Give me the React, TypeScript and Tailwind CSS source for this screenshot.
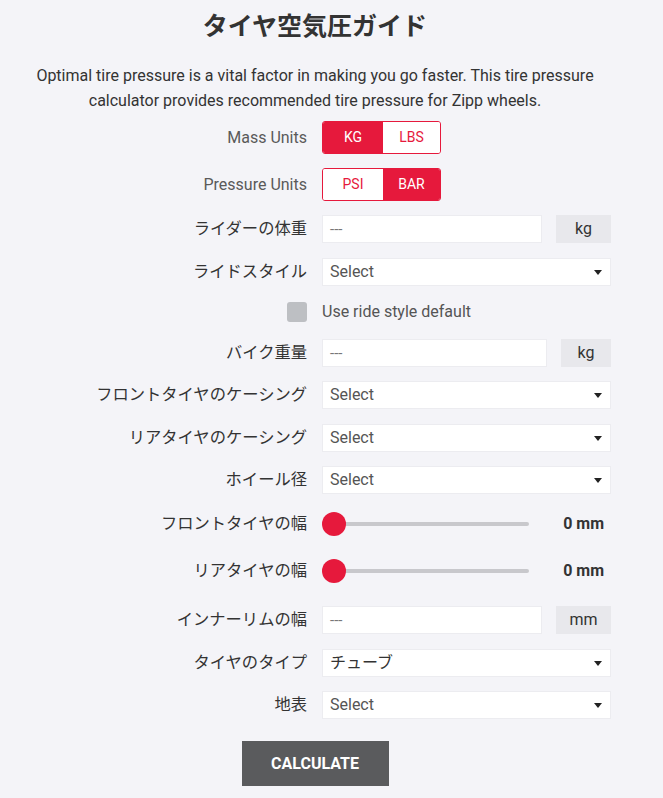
import React from 'react'

const font = { fontFamily: 'Roboto, "Noto Sans CJK JP", sans-serif' }

function Row({ label, mt, en, children }: { label: string; mt: string; en?: boolean; children: React.ReactNode }) {
  return (
    <div className={`flex items-center ${mt}`}>
      <div className={`w-[308px] pr-[1px] text-right leading-none ${en ? 'text-[16px] text-[#5a5a5a]' : 'text-[16.3px] text-[#333]'}`}>
        {label}
      </div>
      <div className="ml-[14px] w-[289px]">{children}</div>
    </div>
  )
}

function Toggle({ left, right, active }: { left: string; right: string; active: 0 | 1 }) {
  const on = 'bg-[#e6193c] text-white'
  const off = 'bg-white text-[#e6193c]'
  return (
    <div className="flex h-[33px] w-[119px] overflow-hidden rounded-[3px] border border-[#e6193c] text-[14px]">
      <div className={`flex w-[60px] items-center justify-center ${active === 0 ? on : off}`}>{left}</div>
      <div className={`flex flex-1 items-center justify-center ${active === 1 ? on : off}`}>{right}</div>
    </div>
  )
}

function Select({ value, dark }: { value: string; dark?: boolean }) {
  return (
    <div className="flex h-[28px] w-[289px] items-center justify-between border border-[#ececf0] bg-white pl-[7px] pr-[8px]">
      <span className={`text-[16px] ${dark ? 'text-[#333]' : 'text-[#555]'}`}>{value}</span>
      <svg width="8" height="5" viewBox="0 0 8 5">
        <path d="M0 0h8L4 5z" fill="#222" />
      </svg>
    </div>
  )
}

function UnitInput({ unit, inputW, boxW }: { unit: string; inputW: string; boxW: string }) {
  return (
    <div className="flex h-[28px] items-stretch">
      <div className={`${inputW} flex items-center border border-[#ececf0] bg-white pl-[7px] text-[15px] text-[#777]`}>---</div>
      <div className={`ml-[14px] ${boxW} flex items-center justify-center bg-[#e8e8ec] text-[16px] text-[#333]`}>{unit}</div>
    </div>
  )
}

function Slider() {
  return (
    <div className="flex h-[28px] items-center">
      <div className="relative h-[24px] w-[207px]">
        <div className="absolute left-[10px] right-0 top-[10px] h-[4px] rounded-full bg-[#c8c8cc]" />
        <div className="absolute left-0 top-0 h-[24px] w-[24px] rounded-full bg-[#e6193c]" />
      </div>
      <div className="ml-auto mr-[7px] text-[16px] font-bold text-[#333]">0 mm</div>
    </div>
  )
}

export default function App() {
  return (
    <div className="min-h-[798px] w-full bg-[#f4f4f8]" style={font}>
      <div className="flex w-[630px] flex-col pb-[12px]">
        <h1 className="pt-[9px] text-center text-[25px] font-bold leading-[36px] text-[#333]">タイヤ空気圧ガイド</h1>
        <p className="mt-[18px] px-[20px] text-center text-[16px] leading-[25px] text-[#333]">
          Optimal tire pressure is a vital factor in making you go faster. This tire pressure calculator provides recommended tire pressure for Zipp wheels.
        </p>

        <Row label="Mass Units" mt="mt-[8px]" en>
          <Toggle left="KG" right="LBS" active={0} />
        </Row>
        <Row label="Pressure Units" mt="mt-[14px]" en>
          <Toggle left="PSI" right="BAR" active={1} />
        </Row>
        <Row label="ライダーの体重" mt="mt-[14px]">
          <UnitInput unit="kg" inputW="w-[220px]" boxW="w-[55px]" />
        </Row>
        <Row label="ライドスタイル" mt="mt-[15px]">
          <Select value="Select" />
        </Row>
        <div className="mt-[16px] flex h-[20px] items-center">
          <div className="ml-[287px] h-[20px] w-[20px] rounded-[3px] bg-[#bdbfc3]" />
          <span className="ml-[15px] text-[16px] text-[#555]">Use ride style default</span>
        </div>
        <Row label="バイク重量" mt="mt-[17px]">
          <UnitInput unit="kg" inputW="w-[225px]" boxW="w-[50px]" />
        </Row>
        <Row label="フロントタイヤのケーシング" mt="mt-[14px]">
          <Select value="Select" />
        </Row>
        <Row label="リアタイヤのケーシング" mt="mt-[15px]">
          <Select value="Select" />
        </Row>
        <Row label="ホイール径" mt="mt-[14px]">
          <Select value="Select" />
        </Row>
        <Row label="フロントタイヤの幅" mt="mt-[16px]">
          <Slider />
        </Row>
        <Row label="リアタイヤの幅" mt="mt-[19px]">
          <Slider />
        </Row>
        <Row label="インナーリムの幅" mt="mt-[21px]">
          <UnitInput unit="mm" inputW="w-[220px]" boxW="w-[55px]" />
        </Row>
        <Row label="タイヤのタイプ" mt="mt-[15px]">
          <Select value="チューブ" dark />
        </Row>
        <Row label="地表" mt="mt-[14px]">
          <Select value="Select" />
        </Row>
        <div className="mt-[22px] flex justify-center">
          <button className="h-[45px] w-[147px] bg-[#5a5b5d] text-[16px] font-bold uppercase text-white">Calculate</button>
        </div>
      </div>
    </div>
  )
}
